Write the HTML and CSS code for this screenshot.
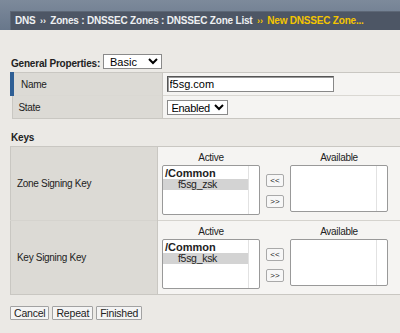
FILE: index.html
```html
<!DOCTYPE html>
<html>
<head>
    <title>New DNSSEC Zone</title>
    <link rel="stylesheet" href="styles.css">
</head>
<body>
    <div class="header">
        <div class="crumbs">
            DNS <span class="sep">&rsaquo;&rsaquo;</span> Zones : DNSSEC Zones : DNSSEC Zone List
            <span class="current"><span class="sep">&rsaquo;&rsaquo;</span> New DNSSEC Zone...</span>
        </div>
    </div>

    <div class="content">
        <div class="section-title general">
            General Properties:
            <select class="mode"><option>Basic</option></select>
        </div>
        <table class="props">
            <tr>
                <td class="label required">Name</td>
                <td class="value"><input class="name-input" type="text" value="f5sg.com"></td>
            </tr>
            <tr>
                <td class="label">State</td>
                <td class="value"><select class="state"><option>Enabled</option></select></td>
            </tr>
        </table>

        <div class="section-title keys-title">Keys</div>
        <table class="keys">
            <tr>
                <td class="label">Zone Signing Key</td>
                <td class="value">
                    <div class="swap">
                        <div class="col">
                            <div class="col-head">Active</div>
                            <div class="listbox">
                                <div class="group">/Common</div>
                                <div class="item selected">f5sg_zsk</div>
                            </div>
                        </div>
                        <div class="arrows">
                            <button class="mini">&lt;&lt;</button>
                            <button class="mini">&gt;&gt;</button>
                        </div>
                        <div class="col">
                            <div class="col-head">Available</div>
                            <div class="listbox short"></div>
                        </div>
                    </div>
                </td>
            </tr>
            <tr>
                <td class="label">Key Signing Key</td>
                <td class="value">
                    <div class="swap">
                        <div class="col">
                            <div class="col-head">Active</div>
                            <div class="listbox">
                                <div class="group">/Common</div>
                                <div class="item selected">f5sg_ksk</div>
                            </div>
                        </div>
                        <div class="arrows">
                            <button class="mini">&lt;&lt;</button>
                            <button class="mini">&gt;&gt;</button>
                        </div>
                        <div class="col">
                            <div class="col-head">Available</div>
                            <div class="listbox short"></div>
                        </div>
                    </div>
                </td>
            </tr>
        </table>

        <div class="actions">
            <button class="btn">Cancel</button>
            <button class="btn">Repeat</button>
            <button class="btn">Finished</button>
        </div>
    </div>
</body>
</html>
```

FILE: styles.css
```css
body {
    margin: 0;
    background-color: #ebe9e5;
    font-family: "Liberation Sans", Arial, sans-serif;
    font-size: 10px;
    letter-spacing: -0.3px;
    color: #222;
}

.header {
    height: 30px;
    background: linear-gradient(#7d8a9b, #68778b);
    padding-top: 11px;
    box-sizing: border-box;
}

.crumbs {
    margin-left: 10px;
    height: 19px;
    background-color: #4d5665;
    border-top: 1px solid #5d6776;
    border-left: 1px solid #5d6776;
    box-sizing: border-box;
    padding-left: 4px;
    line-height: 17px;
    color: #eef0f2;
    font-weight: bold;
    font-size: 10px;
    letter-spacing: -0.2px;
    white-space: nowrap;
    overflow: hidden;
}

.crumbs .sep {
    font-size: 9px;
    padding: 0 2px;
}

.crumbs .current {
    color: #f4c500;
}

.content {
    padding-left: 10px;
}

.section-title {
    font-weight: bold;
    font-size: 10px;
    letter-spacing: -0.2px;
    padding-left: 1px;
}

.general {
    margin-top: 24px;
    height: 18px;
    display: flex;
    align-items: center;
    gap: 3px;
}

.mode {
    font-family: inherit;
    font-size: 11px;
    font-weight: normal;
    width: 59px;
    height: 15px;
    padding: 0 2px;
    border: 1px solid #8a8a8a;
    border-radius: 0;
    background: #fff;
    margin-top: -4px;
}

table {
    border-collapse: collapse;
    width: 100%;
    border: 1px solid #c9c7c2;
    border-right: none;
}

td {
    padding: 0;
}

.label {
    background-color: #dcdad5;
    border-right: 1px solid #c9c7c2;
    color: #222;
}

.value {
    background-color: #f5f4f2;
}

.props tr {
    height: 23px;
}

.props tr + tr td {
    border-top: 1px solid #dad8d3;
}

.props .label {
    width: 150px;
    padding-left: 6px;
    box-sizing: border-box;
}

.props .required {
    border-left: 4px solid #2f5f95;
    padding-left: 7px;
}

.props .value {
    padding-left: 4px;
}

.name-input {
    font-family: inherit;
    font-size: 11px;
    width: 167px;
    height: 16px;
    box-sizing: border-box;
    border: 1px solid #555;
    border-bottom-color: #888;
    border-right-color: #888;
    padding: 0 2px;
    display: block;
    box-shadow: inset 1px 1px 0 #999;
}

.state {
    font-family: inherit;
    font-size: 11px;
    letter-spacing: -0.3px;
    height: 15px;
    width: auto;
    padding: 0;
    border: 1px solid #8a8a8a;
    border-radius: 0;
    background: #fff;
    display: block;
}

.keys-title {
    margin-top: 13px;
    margin-bottom: 3px;
}

.keys tr {
    height: 74px;
}

.keys tr + tr td {
    border-top: 1px solid #d5d3ce;
}

.keys .label {
    width: 147px;
    padding-left: 6px;
    box-sizing: border-box;
}

.keys .value {
    padding-left: 4px;
    vertical-align: top;
}

.swap {
    display: flex;
    align-items: flex-start;
    padding-top: 3px;
}

.col-head {
    text-align: center;
    font-size: 10px;
    height: 15px;
    line-height: 15px;
    color: #222;
}

.listbox {
    width: 98px;
    height: 50px;
    background: #fff;
    border: 1px solid #999;
    border-radius: 2px;
    box-sizing: border-box;
    padding-right: 11px;
    position: relative;
    font-size: 10px;
    line-height: 12px;
}

.listbox::after {
    content: "";
    position: absolute;
    top: 0;
    bottom: 0;
    right: 10px;
    border-left: 1px solid #e2e2e2;
}

.listbox.short {
    height: 47px;
}

.group {
    font-weight: bold;
    font-size: 11px;
    letter-spacing: 0;
    padding: 1px 0 0 2px;
    height: 13px;
    box-sizing: border-box;
}

.item {
    padding-left: 15px;
    height: 11px;
    line-height: 11px;
    font-size: 10.5px;
}

.selected {
    background-color: #d3d3d3;
}

.arrows {
    display: flex;
    flex-direction: column;
    gap: 8px;
    margin: 24px 6px 0 6px;
}

.mini {
    width: 18px;
    height: 13px;
    padding: 0;
    font-family: inherit;
    font-size: 8px;
    line-height: 10px;
    background: #f7f7f7;
    border: 1px solid #a9a9a9;
    border-radius: 2px;
    color: #222;
}

.actions {
    margin-top: 11px;
    display: flex;
    gap: 3px;
}

.btn {
    font-family: inherit;
    font-size: 10.5px;
    letter-spacing: -0.2px;
    height: 14px;
    padding: 0 3px;
    line-height: 12px;
    background: #f4f4f4;
    border: 1px solid #a2a2a2;
    border-radius: 1px;
    color: #222;
}
```
